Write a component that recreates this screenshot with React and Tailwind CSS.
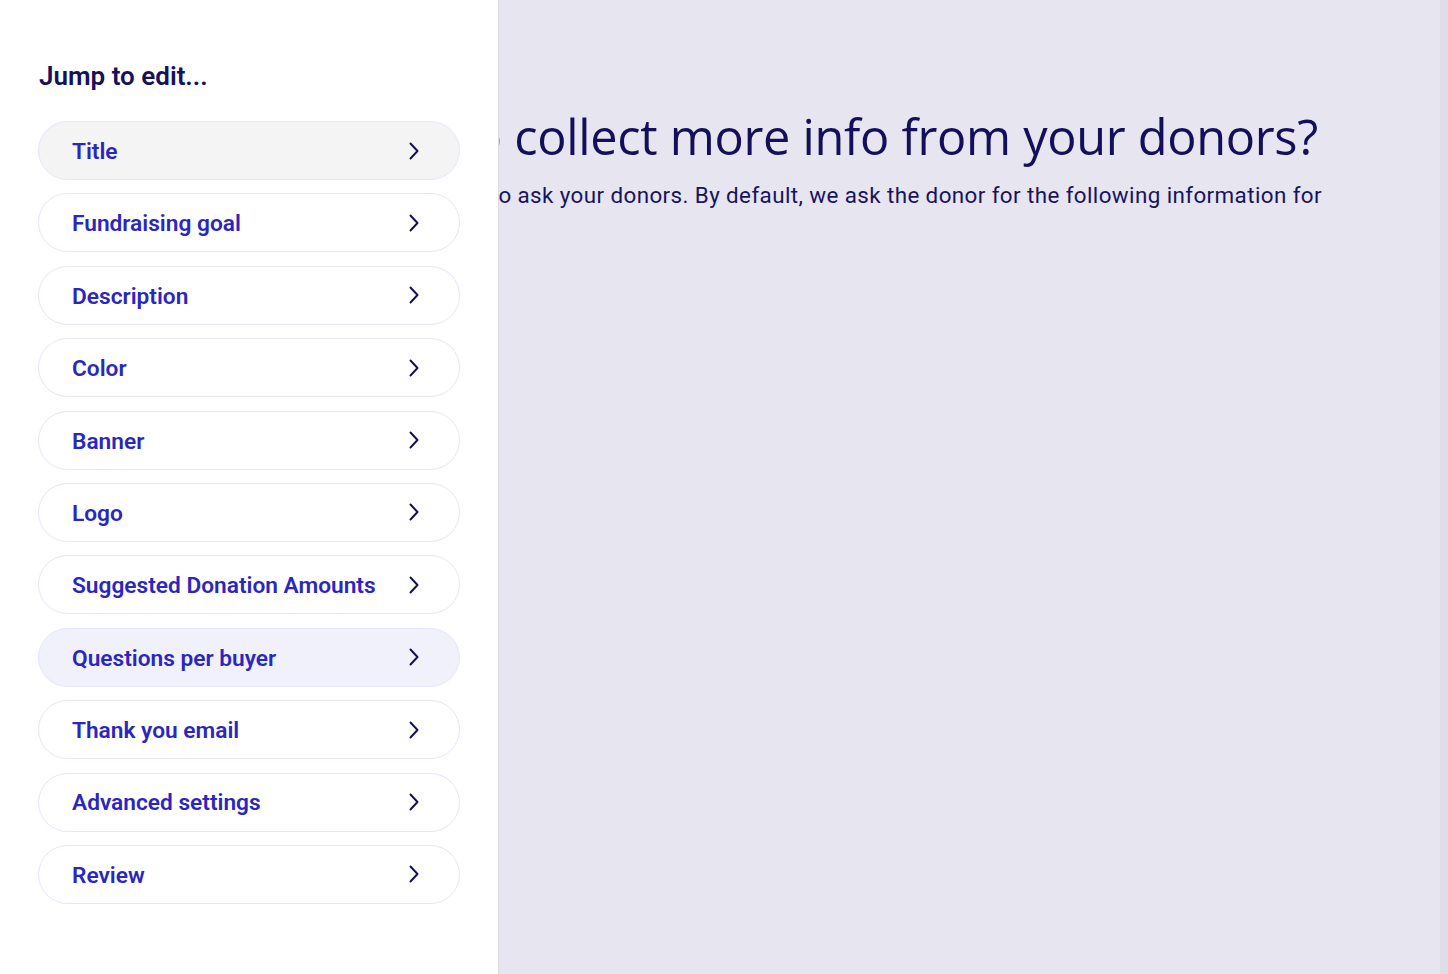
const sections = [
  'Title',
  'Fundraising goal',
  'Description',
  'Color',
  'Banner',
  'Logo',
  'Suggested Donation Amounts',
  'Questions per buyer',
  'Thank you email',
  'Advanced settings',
  'Review',
];

const Chevron = () => (
  <svg width="12" height="18" viewBox="0 0 12 18" fill="none" className="shrink-0">
    <path d="M2.5 1.5 L9.5 9 L2.5 16.5" stroke="#15125a" strokeWidth="2" strokeLinecap="round" strokeLinejoin="round" />
  </svg>
);

const SectionButton = ({ label, variant }) => {
  const bg =
    variant === 'hover' ? 'bg-[#f4f4f5]' : variant === 'active' ? 'bg-[#f1f1fc]' : 'bg-white';
  return (
    <button
      className={`w-full h-[59px] rounded-full border border-[#e6e5fa] ${bg} flex items-center justify-between pl-[33px] pr-[39px] text-left`}
    >
      <span className="pt-[3px] text-[22.7px] font-semibold text-[#2b27be]">{label}</span>
      <Chevron />
    </button>
  );
};

export default function App() {
  return (
    <div
      className="relative w-[1448px] h-[974px] overflow-hidden bg-[#e7e5f0]"
      style={{ fontFamily: 'Roboto, "Liberation Sans", sans-serif' }}
    >
      {/* page behind the drawer */}
      <div className="flex h-full">
        <div className="flex-1 pt-[104px] pr-[118px] flex flex-col items-end overflow-hidden">
          <h1
            className="whitespace-nowrap mr-[4px] text-[48.7px] leading-[64px] font-medium text-[#130f5b]"
            style={{ fontFamily: '"Open Sans", "Liberation Sans", sans-serif', letterSpacing: '-0.3px' }}
          >
            Do you want to collect more info from your donors?
          </h1>
          <p className="whitespace-nowrap mt-[12px] text-[22.4px] leading-[30px] text-[#17145e] tracking-[0.4px]">
            Choose what questions to ask your donors. By default, we ask the donor for the following information for
          </p>
        </div>
        <div className="w-[8px] h-full bg-[#dfdde7]" />
      </div>

      {/* drawer */}
      <aside className="absolute top-0 left-0 h-full w-[499px] bg-white border-r border-[#dcdbe2] pl-[38px] pr-[38px] pt-[58px]">
        <h2 className="text-[26px] leading-[36px] font-semibold text-[#15125a] pl-[1px] mb-[27px]">
          Jump to edit...
        </h2>
        <div className="flex flex-col gap-[13.4px]">
          {sections.map((s) => (
            <SectionButton
              key={s}
              label={s}
              variant={s === 'Title' ? 'hover' : s === 'Questions per buyer' ? 'active' : undefined}
            />
          ))}
        </div>
      </aside>
    </div>
  );
}
